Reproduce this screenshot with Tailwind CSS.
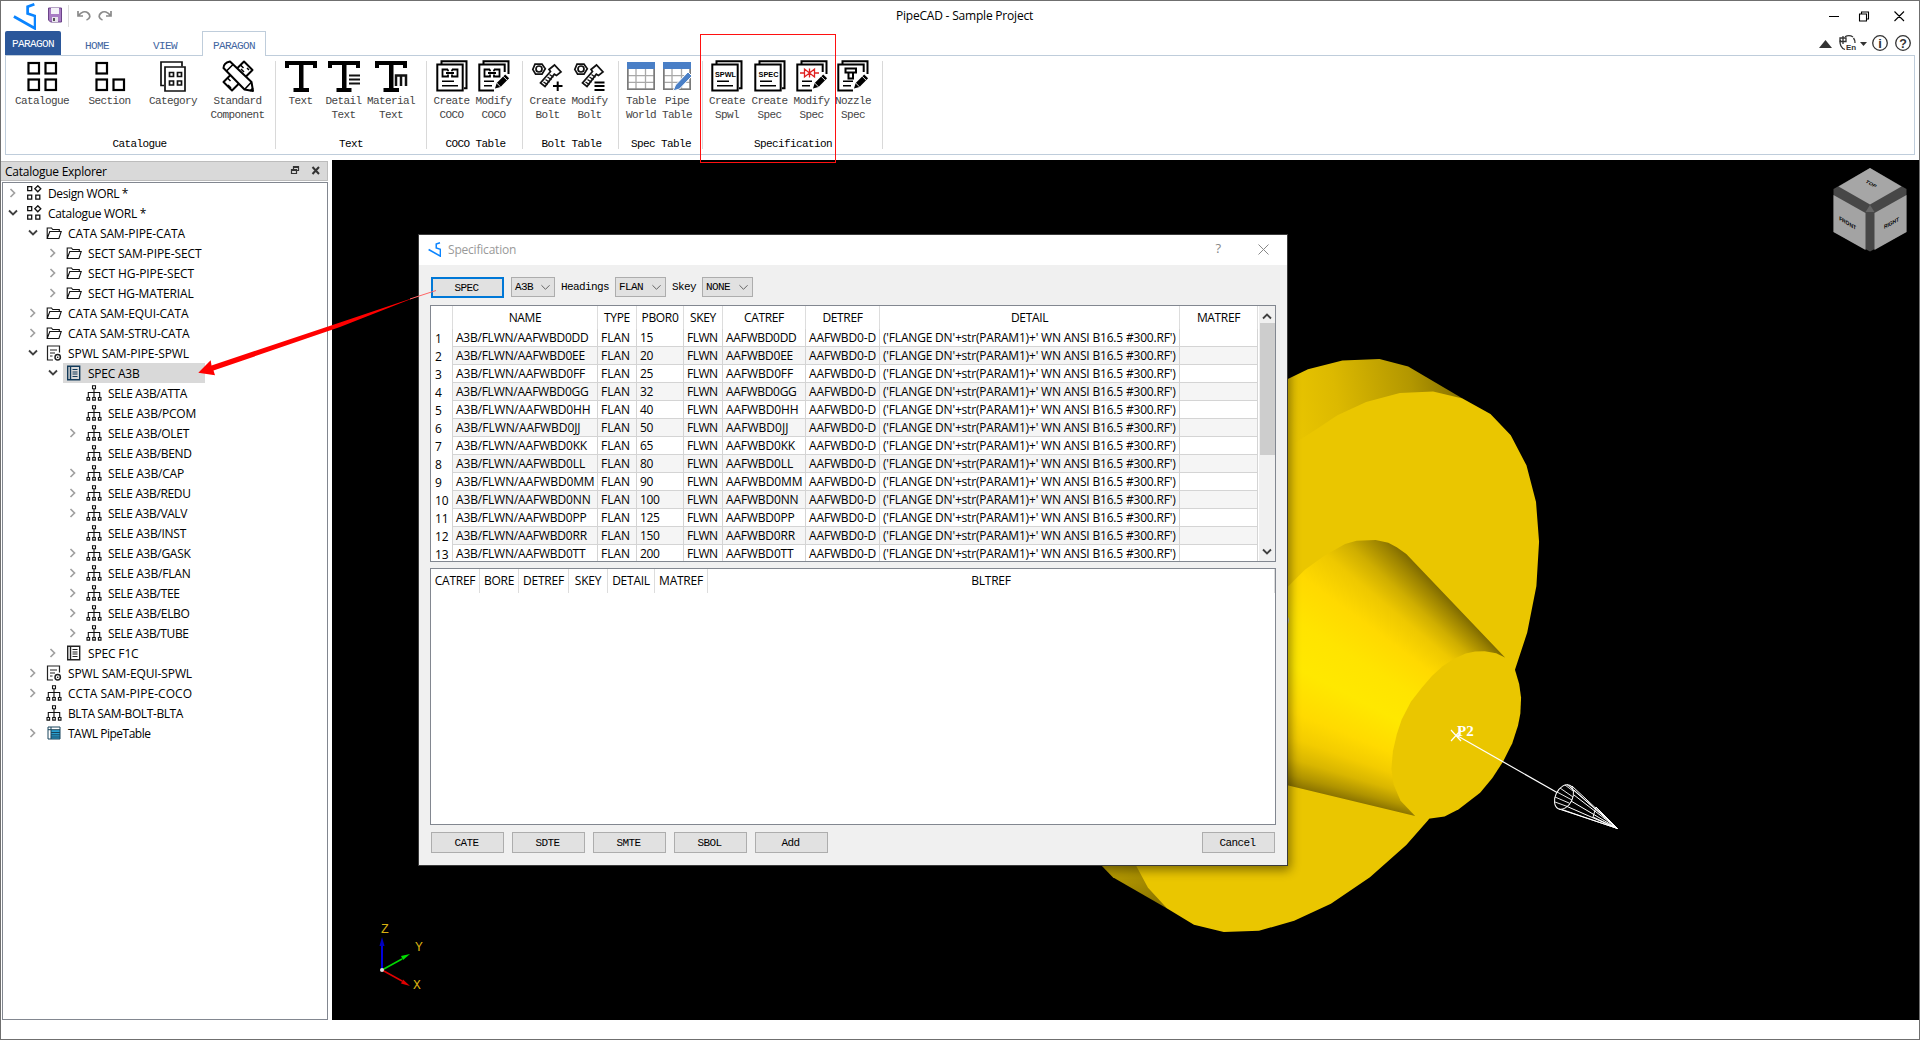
<!DOCTYPE html>
<html lang="en">
<head>
<meta charset="utf-8">
<title>PipeCAD - Sample Project</title>
<script src="https://cdn.jsdelivr.net/npm/@tailwindcss/browser@4"></script>
</head>
<body class="w-[1920px] h-[1040px] overflow-hidden bg-white font-['Open_Sans','Noto_Sans',sans-serif] text-[12px] text-black">
<svg class="hidden">
  <defs>
    <symbol id="logo" viewBox="0 0 22 26"><path d="M20.5 1.200L14 3.600v6.600l7.200 2.400v12L.8 13" fill="none" stroke="#0a84ff" stroke-width="2.600"/></symbol>
    <symbol id="chev-r" viewBox="0 0 10 10"><path d="M2.500 1l4 4-4 4" fill="none" stroke="#a0a0a0" stroke-width="1.700"/></symbol>
    <symbol id="chev-d" viewBox="0 0 10 10"><path d="M1 2.500l4 4 4-4" fill="none" stroke="#404040" stroke-width="1.800"/></symbol>
    <symbol id="t-world" viewBox="0 0 16 16"><path d="M1.700 1.700h4v4h-4zM1.700 10.200h4v4h-4zM9.800 10.200h4v4h-4zM11.800.8l3 3-3 3-3-3z" fill="none" stroke="#111" stroke-width="1.300"/></symbol>
    <symbol id="t-folder" viewBox="0 0 16 16"><path d="M1.200 13.500V3h4.300l1.200 1.500h6.600v2M1.200 13.500l2.600-7h11.400l-2.300 7z" fill="none" stroke="#111" stroke-width="1.100"/></symbol>
    <symbol id="t-spwl" viewBox="0 0 16 16"><path d="M7 15H1.500V1h12v6.500M4 5h7M4 8h5M4 11h2.500" fill="none" stroke="#222" stroke-width="1.200"/><circle cx="11.700" cy="12.200" r="2.700" fill="none" stroke="#222" stroke-width="1.500"/><circle cx="11.700" cy="12.200" r=".8"/></symbol>
    <symbol id="t-spec" viewBox="0 0 16 16"><path d="M1.700 1.200h12v13.600h-12zM4.500 1.200v13.600" fill="none" stroke="currentColor" stroke-width="1.400"/><path d="M6.500 4.500h5M6.500 7h5M6.500 9h5M6.500 11.500h5" stroke="currentColor" stroke-width="1.200"/></symbol>
    <symbol id="t-sele" viewBox="0 0 16 16"><path d="M6.500.7h3v3h-3zM1 12.500h2.600v2.600H1zM6.700 12.500h2.600v2.600H6.700zM12.400 12.500H15v2.600h-2.600zM8 3.700v8.800M2.300 12.500V7.500h11.400v5" fill="none" stroke="#111" stroke-width="1.100"/></symbol>
    <symbol id="t-table" viewBox="0 0 16 16"><path d="M2 2.500h12v11H2z" fill="#fff"/><path d="M5 5h9v9H5z" fill="#2a9fd0"/><path d="M2 2h12v12H2zM2 4.700h12M5 2v12M5 7.500h9M5 9.800h9M5 12h9" fill="none" stroke="#18455c" stroke-width="1"/></symbol>
    <g id="docs" fill="none" stroke="#000" stroke-width="2"><path d="M5.500 4V1.300h25v27H28" /><path d="M1.300 4.600h25.400v26H1.300z" fill="#fff"/><path d="M6 21.300h12M6 25.800h16" stroke-width="1.600"/></g>
    <g id="docs-cut" fill="none" stroke="#000" stroke-width="2"><path d="M5.500 4V1.300h25V14M16 30.600H1.300v-26h25.400V12"/><path d="M6 21.300h10M6 25.800h8" stroke-width="1.600"/></g>
    <g id="pencil"><path d="M17 28.500l1.700-5.500L27.200 14.400l3.900 3.800-8.600 8.700z" fill="#000"/><path d="M25.200 16.300l4 4M18.700 23l3.800 3.900" stroke="#fff" stroke-width=".9"/></g>
    <g id="link" fill="none" stroke="#000" stroke-width="1.800"><path d="M12 9.500H6.500v7H12v-2M16 9.500h5.500v7H16v-2M10 13h8M12 9.500v1.700M16 9.500v1.700"/></g>
    <g id="bolt" fill="none" stroke="#111" stroke-width="1.700"><path d="M3 3.200h7l3.300 4.500-3.300 5.500H3.600L.8 8.400z" transform="translate(0 1)"/><circle cx="7" cy="9" r="3"/><path d="M17 9.500L22.500 5l6.500 7-4.500 3.500-2.200-1.300-9.300 12.300-4.500-3.500 10-11.500z"/><path d="M17.500 14.500l4 2.800M15.500 17l4 2.800M13.500 19.500l4 2.800M11.500 22l4 2.600" stroke-width="1.300"/></g>
    <g id="tee"><path d="M0 1h32v7h-4V5H18.500v23H24v4H8.500v-4h5.500V5H4v3H0z" fill="#000"/></g>
    <g id="grid"><path d="M2 2h28v7H2z" fill="#4a7fc6"/><path d="M2.800 9v20.200h26.400V9M11 9v20M20.500 9v20M3 15.700h26M3 22.400h26" fill="none" stroke="#a8a8a8" stroke-width="1.300"/><path d="M2.800 9v20.200h26.400V9" fill="none" stroke="#7a7a7a" stroke-width="1.600"/></g>
  </defs>
</svg>

<div class="relative flex flex-col w-[1920px] h-[1040px] border border-[#6f6f6f]">
  <!-- title bar -->
  <header class="flex h-[30px] items-center shrink-0 relative">
    <svg class="w-[23px] h-[27px] ml-3"><use href="#logo"/></svg>
    <svg class="w-4 h-4 ml-[11px] mt-[-2px]" viewBox="0 0 16 16"><path d="M1.500 1h13v14h-11l-2-2z" fill="#a87bc4" stroke="#6b4488"/><path d="M4 1h8v6H4z" fill="#f4f2f8"/><path d="M5 10h6v5H5z" fill="#e8e4ee"/><path d="M6 11h2v3H6z" fill="#555"/></svg>
    <div class="w-px h-[22px] bg-[#dcdcdc] ml-[5px]"></div>
    <svg class="w-[14px] h-[12px] ml-2 mt-[-3px]" viewBox="0 0 14 12"><path d="M1 2v5h5M1.500 6.500C4 3 8 1.500 11 4s2 6-1.500 7" fill="none" stroke="#8a8a8a" stroke-width="1.700"/></svg>
    <svg class="w-[14px] h-[12px] ml-[7px] mt-[-3px]" viewBox="0 0 14 12"><path d="M13 2v5H8M12.500 6.500C10 3 6 1.500 3 4s-2 6 1.500 7" fill="none" stroke="#8a8a8a" stroke-width="1.700"/></svg>
    <div class="flex-1"></div>
    <svg class="w-[90px] h-5 mr-[5px]" viewBox="0 0 90 20" fill="none" stroke="#000" stroke-width="1.100"><path d="M5 10.500h10M35.500 8h7v7h-7zM37.500 8V6h7v7h-2M70.500 5.500l9.500 9.500M80 5.500L70.500 15"/></svg>
    <div class="absolute inset-x-0 top-[7px] text-center leading-4 pl-[9px] tracking-[-0.2px]">PipeCAD - Sample Project</div>
  </header>
  <!-- ribbon tabs -->
  <nav class="flex h-[24px] shrink-0 pl-1 font-['Liberation_Mono',monospace] text-[11px] tracking-[-0.6px] text-[#41659f] relative z-10">
    <div class="w-[56px] h-[24px] bg-[#2b579a] text-white text-center leading-[26px] rounded-t-[2px]">PARAGON</div>
    <div class="w-[72px] text-center leading-[31px]">HOME</div>
    <div class="w-[64px] text-center leading-[31px]">VIEW</div>
    <div class="w-[64px] ml-[5px] h-[25px] text-center leading-[29px] bg-white border border-b-0 border-[#bfcddb]">PARAGON</div>
    <div class="flex-1"></div>
    <svg class="w-[100px] h-6 mr-[5px]" viewBox="0 0 100 24"><path d="M5 17l6.500-8 6.500 8zM46 11h7l-3.500 4z" fill="#333"/><g fill="none" stroke="#333" stroke-width="1.300"><path d="M39 6a7.500 7.500 0 0 0-8-.2M26.500 9A7.500 7.500 0 0 0 31 18.500M39.500 7a7.500 7.500 0 0 1 1.500 5"/><path d="M26 7h6v3.500h-6zM29 5v8"/><circle cx="66" cy="12" r="7.300"/><circle cx="89" cy="12" r="7.300"/></g><g fill="#333" font-family="Liberation Sans" font-weight="bold" letter-spacing="0"><text x="32" y="19" font-size="8">En</text><text x="66" y="16.500" font-size="13" text-anchor="middle">i</text><text x="89" y="16.500" font-size="12.500" text-anchor="middle">?</text></g></svg>
  </nav>
  <!-- ribbon -->
  <section id="ribbon" class="flex h-[100px] mx-1 mr-[4px] shrink-0 border border-[#bfcddb] font-['Liberation_Mono',monospace] text-[11px] tracking-[-0.6px] leading-[14px]"></section>
  <div class="flex flex-1 min-h-0 pt-[5px]">
    <!-- dock -->
    <aside class="flex flex-col w-[327px] shrink-0 mr-[4px] h-[860px]">
      <div class="flex items-center h-[20px] bg-[#d9d9d9] border border-[#bcbcbc] border-l-0 pl-1 pr-[7px] mt-px">
        <span class="flex-1 tracking-[-0.25px] pt-px">Catalogue Explorer</span>
        <svg class="w-[30px] h-3" viewBox="0 0 30 12" fill="none" stroke="#333"><path d="M1.500 4.500h5v4h-5zM3.500 4V1.500h5v4H7M1.500 5.500h5M3.500 2.500h5" stroke-width="1.200"/><path d="M22.500 2l6.500 7M29 2l-6.500 7" stroke-width="2"/></svg>
      </div>
      <div id="tree" class="flex-1 mt-px ml-px border border-[#828790] bg-white"></div>
    </aside>
    <!-- 3D view -->
    <main class="w-[1587px] h-[860px] bg-black shrink-0">
      <svg width="1587" height="860" viewBox="332 160 1587 860">
        <defs>
          <linearGradient id="rimTop" gradientUnits="userSpaceOnUse" x1="600" y1="200" x2="1030" y2="120"><stop offset="0" stop-color="#eac600"/><stop offset=".3" stop-color="#dcb900"/><stop offset=".75" stop-color="#b39700"/><stop offset="1" stop-color="#8d7700"/></linearGradient>
          <linearGradient id="rimLow" gradientUnits="userSpaceOnUse" x1="170" y1="1290" x2="230" y2="1430"><stop offset="0" stop-color="#c8a900"/><stop offset="1" stop-color="#8d7700"/></linearGradient>
          <clipPath id="cone"><polygon transform="translate(1060 340) scale(.38265 .39541)" points="560,660 594,625 640,581 690,546 745,516 775,508 825,506 858,513 880,524 905,541 1163,803 1110,860 928,1204 594,1126 560,1118"/></clipPath>
        </defs>
        <g transform="translate(1060 340) scale(.38265 .39541)">
          <path d="M500 160L594 99 648 74 738 52 835 48 910 67 1052 148 800 300 500 350z" fill="url(#rimTop)"/>
          <path d="M80 1290L107 1328 138 1359 280 1438 300 1290z" fill="url(#rimLow)"/>
          <path d="M500 335L594 272 660 232 725 190 800 157 888 134 975 130 1052 148 1125 187 1178 241 1219 317 1244 410 1252 510 1245 622 1221 740 1189 834 963 1213 905 1277 810 1359 708 1426 612 1469 520 1494 428 1497 350 1479 280 1438 230 1385 198 1328 190 1290z" fill="#eac600"/>
        </g>
        <foreignObject x="1260" y="520" width="260" height="300" clip-path="url(#cone)"><div class="w-[260px] h-[300px] bg-[conic-gradient(from_0deg_at_468px_372px,#8a7300_283.6deg,#b09400_285deg,#d9b600_287deg,#f3cc00_289.500deg,#ffda00_292.500deg,#ffe800_297.500deg,#ffe400_302deg,#ffd900_306.500deg,#eec800_310deg,#cfae00_312.500deg,#9b8200_315.200deg,#7d6900_316.500deg)]"></div></foreignObject>
        <g transform="translate(1060 340) scale(.38265 .39541)">
          <path d="M1163 803L1189 834 1200 870 1205 905 1203 945 1197 975 1182 1020 1158 1066 1130 1108 1098 1145 1042 1187 1005 1205 963 1211 928 1204 890 1165 872 1125 866 1085 870 1040 880 998 893 960 917 915 945 880 972 850 1000 825 1030 806 1060 793 1085 788 1110 787 1140 792z" fill="#eac600"/>
        </g>
        <path d="M1287 616q4 3 0 10" fill="#ccc"/>
        <g stroke="#fff" fill="none" stroke-width="1.200"><path d="M1456 735L1557 792.500M1451 730l10 11M1461 730l-10 11" />
        <ellipse cx="1564" cy="797" rx="8.500" ry="13" transform="rotate(26 1564 797)" stroke-width="1"/>
        <path d="M1572 786L1617.500 828.500M1567 784.500L1617.500 828.500M1574 790L1617.500 828.500M1574 795L1617.500 828.500M1571 801L1617.500 828.500M1566 806L1617.500 828.500M1559 809L1617.500 828.500M1562 809.500L1617.500 828.500M1596 807L1617.500 828.500 1593 817z" stroke-width="1"/>
        <path d="M1565 785l8 6M1560 788l13 9M1557 792l15 8M1555 797l14 6M1555 802l11 4" stroke-width=".9"/></g>
        <text x="1457" y="736" font-family="Liberation Serif" font-weight="bold" font-size="15" fill="#fff">P2</text>
        <!-- axis triad -->
        <g stroke-width="1.500"><path d="M382 970V944" stroke="#0000dc" stroke-width="2"/><path d="M382 937l-2.500 9h5z" fill="#0000c0"/><path d="M382 970l20-11" stroke="#00d800"/><path d="M410 954l-9 2 2 4z" fill="#00e000"/><path d="M382 970l20 11" stroke="#e00000"/><path d="M410 986l-9-2.500 2-4z" fill="#e00000"/><circle cx="382" cy="970" r="2" fill="#ddd"/></g>
        <g font-family="Liberation Mono" font-size="13" fill="#d8b010"><text x="381" y="933">Z</text><text x="415" y="951">Y</text><text x="413" y="989">X</text></g>
        <!-- view cube -->
        <path d="M1870 168L1906.500 189V232L1870 251.500 1833.500 232V189z" fill="#474747"/>
        <path d="M1870 168L1901.500 186.500 1870 204.500 1838.500 186.500z" fill="#a6a6a6"/><path d="M1833.500 195L1865.500 213V250L1833.500 232z" fill="#a3a3a3"/><path d="M1906.500 195L1874.500 213V250L1906.500 232z" fill="#a3a3a3"/><path d="M1870 205l4.500 7h-9z" fill="#666"/>
        <g font-family="Liberation Sans" font-weight="bold" font-size="6.500" text-anchor="middle"><text transform="matrix(.75 .4 -.5 .5 1870 185)">TOP</text><text transform="matrix(.75 .45 0 .9 1847.500 225)">FRONT</text><text transform="matrix(.75 -.4 0 .9 1891.500 225)">RIGHT</text></g>
      </svg>
    </main>
  </div>

  <!-- dialog -->
  <section class="absolute left-[417px] top-[233px] w-[870px] h-[632px] border border-[#3a3a3a] bg-[#f0f0f0] flex flex-col shadow-[2px_4px_10px_rgba(0,0,0,0.45)]">
    <div class="flex items-center h-[30px] bg-white pl-[9px] pr-[18px] shrink-0">
      <svg class="w-[13px] h-[15px] mt-[-2px]"><use href="#logo"/></svg>
      <span class="ml-[7px] flex-1 text-[#999] tracking-[-0.2px]">Specification</span>
      <span class="text-[#888] text-[13px] mr-[37px] mt-[-2px]">?</span>
      <svg class="w-[11px] h-[11px] mt-[-2px]" viewBox="0 0 11 11"><path d="M.5.5l10 10M10.500.5l-10 10" stroke="#888"/></svg>
    </div>
    <div class="flex items-center h-[40px] pl-[12px] pt-[4px] shrink-0 font-['Liberation_Mono',monospace] text-[11px] tracking-[-0.6px]">
      <div class="w-[73px] h-[21px] bg-[#e1e1e1] border-2 border-[#0078d7] text-center leading-[18px] pr-[2px]">SPEC</div>
      <div class="w-[44px] h-[20px] ml-[7px] bg-[#e1e1e1] border border-[#adadad] pl-[3px] pr-1 flex items-center justify-between">A3B<svg class="w-[9px] h-[9px]" viewBox="0 0 10 10"><path d="M.5 2.500l4.500 4.500 4.500-4.500" fill="none" stroke="#555"/></svg></div>
      <span class="ml-[6px] w-[54px]">Headings</span>
      <div class="w-[51px] h-[20px] bg-[#e1e1e1] border border-[#adadad] pl-[3px] pr-1 flex items-center justify-between">FLAN<svg class="w-[9px] h-[9px]" viewBox="0 0 10 10"><path d="M.5 2.500l4.500 4.500 4.500-4.500" fill="none" stroke="#555"/></svg></div>
      <span class="ml-[6px] w-[30px]">Skey</span>
      <div class="w-[51px] h-[20px] bg-[#e1e1e1] border border-[#adadad] pl-[3px] pr-1 flex items-center justify-between">NONE<svg class="w-[9px] h-[9px]" viewBox="0 0 10 10"><path d="M.5 2.500l4.500 4.500 4.500-4.500" fill="none" stroke="#555"/></svg></div>
    </div>
    <div class="flex mx-[11px] w-[846px] h-[257px] bg-white border border-[#828790] shrink-0 overflow-hidden">
      <div id="grid-body" class="w-[828px] tracking-[-0.35px]"></div>
      <div class="flex flex-col w-[16px] bg-[#f0f0f0] items-center justify-between pt-[5px] pb-[4px] relative">
        <svg class="w-[10px] h-[10px] rotate-180"><use href="#chev-d"/></svg>
        <div class="w-[15px] h-[132px] bg-[#cdcdcd] mb-auto mt-[2px]"></div>
        <svg class="w-[10px] h-[10px]"><use href="#chev-d"/></svg>
      </div>
    </div>
    <div class="flex mx-[11px] mt-[6px] w-[846px] h-[257px] bg-white border border-[#828790] shrink-0 leading-[23px] text-center tracking-[-0.25px]">
      <div class="w-[49px] h-6 border-r border-[#ddd]">CATREF</div><div class="w-[39px] h-6 border-r border-[#ddd]">BORE</div><div class="w-[50px] h-6 border-r border-[#ddd]">DETREF</div><div class="w-[39px] h-6 border-r border-[#ddd]">SKEY</div><div class="w-[47px] h-6 border-r border-[#ddd]">DETAIL</div><div class="w-[53px] h-6 border-r border-[#ddd]">MATREF</div><div class="flex-1 h-6 border-r border-[#ddd]">BLTREF</div>
    </div>
    <div class="flex gap-2 mt-[7px] pl-[12px] pr-[12px] font-['Liberation_Mono',monospace] text-[11px] tracking-[-0.6px] text-center leading-[20px]">
      <div class="w-[73px] h-[21px] bg-[#e1e1e1] border border-[#adadad] pr-[2px]">CATE</div><div class="w-[73px] h-[21px] bg-[#e1e1e1] border border-[#adadad] pr-[2px]">SDTE</div><div class="w-[73px] h-[21px] bg-[#e1e1e1] border border-[#adadad] pr-[2px]">SMTE</div><div class="w-[73px] h-[21px] bg-[#e1e1e1] border border-[#adadad] pr-[2px]">SBOL</div><div class="w-[73px] h-[21px] bg-[#e1e1e1] border border-[#adadad] pr-[2px]">Add</div>
      <div class="w-[73px] h-[21px] bg-[#e1e1e1] border border-[#adadad] pr-[2px] ml-auto">Cancel</div>
    </div>
  </section>

  <!-- annotations -->
  <svg class="absolute -left-px -top-px w-[1920px] h-[1040px] pointer-events-none" viewBox="0 0 1920 1040"><rect x="700.500" y="34.500" width="135" height="128" fill="none" stroke="#ff1010"/><path d="M198.300 372.700L210.700 360.300 211.500 365.500 340 322.500 418 296.300 340 327 213.500 370.500 215 375.300z" fill="#f00"/><path d="M410 299l26-8.500" stroke="#f66" stroke-width="1"/></svg>
</div>

<script>
const use = id => `<use href="#${id}"/>`;
const label = (t, y, s) => `<text x="14.500" y="${y}" font-family="Liberation Sans" font-weight="bold" font-size="${s}" letter-spacing="0" text-anchor="middle">${t}</text>`;
const sq = (x, y, s) => `<rect x="${x}" y="${y}" width="${s}" height="${s}" fill="none" stroke="#000" stroke-width="2.200"/>`;
const groups = [
  ["Catalogue", "w-[270px]", [
    ["Catalogue", "w-[72px]", sq(2.5,3,10.5)+sq(19.5,3,10.5)+sq(2.5,19.5,10.5)+sq(19.5,19.5,10.5)],
    ["Section", "w-[63px]", sq(2.5,3,10.5)+sq(2.5,19.5,10.5)+sq(19.5,19.5,10.5)],
    ["Category", "w-[64px]", `<g fill="none" stroke="#111" stroke-width="1.700"><path d="M7 25.500H4V2h21v4.500"/><path d="M8 7h20v24H8z"/><path d="M12.500 12.500h4v4h-4zM20.500 12.500h4v4h-4zM12.500 21h4v4h-4zM20.500 21h4v4h-4z"/></g>`],
    ["Standard<br>Component", "w-[65px]", `<g stroke="#000" stroke-width="2" stroke-linejoin="round"><path d="M22 1.500l8.500 8.500L10 30.500 1.500 22z" fill="#fff" fill-opacity="1"/><path d="M18.500 5l3 3M25 8l2 2M5.500 18l3 3M9 28l-3-3M22 12l-3-3" fill="none" stroke-width="1.500"/><path d="M1.500 8Q1.500 3 8 1.500L29.500 22 31 31l-8.500-1.500z" fill="#fff"/><path d="M4.500 11L11 4.500M22.500 29.500L29.500 22M28 31l3-3" fill="none" stroke-width="1.600"/></g>`]]],
  ["Text", "w-[151px] pl-[2px]", [
    ["Text", "w-[45px]", use("tee")],
    ["Detail<br>Text", "w-[41px]", use("tee")+`<path d="M19.500 13h14v19h-10v-4h-4z" fill="#fff"/><path d="M21 15.500h11M21 19.500h11M21 23.500h11" stroke="#111" stroke-width="2"/>`],
    ["Material<br>Text", "w-[54px]", use("tee")+`<path d="M19 12h14v15H19z" fill="#fff"/><path d="M21 26V15.500h10V26M26 15.500V26" fill="none" stroke="#111" stroke-width="2.500"/>`]]],
  ["COCO Table", "w-[96px] pl-[4px]", [
    ["Create<br>COCO", "w-[41px]", use("docs")+use("link")],
    ["Modify<br>COCO", "w-[43px]", use("docs-cut")+use("link")+use("pencil")]]],
  ["Bolt Table", "w-[96px] pl-1", [
    ["Create<br>Bolt", "w-[41px]", use("bolt")+`<path d="M21 26h9.500M25.700 21.500V31" stroke="#000" stroke-width="2"/>`],
    ["Modify<br>Bolt", "w-[43px]", use("bolt")+`<path d="M20.500 22.500h10M20.500 26h10M20.500 30h10" stroke="#000" stroke-width="2"/>`]]],
  ["Spec Table", "w-[84px] pl-[3px]", [
    ["Table<br>World", "w-[38px]", use("grid")],
    ["Pipe<br>Table", "w-[34px]", use("grid")+`<path d="M12 31l2.500-6L27 12l4 4-12.500 13z" fill="#4a7fc6" stroke="#fff"/>`]]],
  ["Specification", "w-[180px] pl-[3px]", [
    ["Create<br>Spwl", "w-[42px]", use("docs")+label("SPWL",16.5,7.3)],
    ["Create<br>Spec", "w-[43px]", use("docs")+label("SPEC",16.5,7.3)],
    ["Modify<br>Spec", "w-[41px]", use("docs-cut")+`<path d="M4 13h4M19 13h4M8.500 9v8l5-4zM18.500 9v8l-5-4zM13.500 8.500v9" fill="none" stroke="#e02020" stroke-width="1.300"/>`+use("pencil")],
    ["Nozzle<br>Spec", "w-[42px]", use("docs-cut")+`<path d="M8.500 8.500h10.500v4H8.500zM11.500 12.500v6h4.500v-6" fill="none" stroke="#000" stroke-width="2"/>`+use("pencil")]]]
];
document.getElementById("ribbon").innerHTML = groups.map(([name, cls, items]) =>
  `<div class="${cls} relative flex flex-col pt-[4px] shrink-0">
    <div class="flex h-[77px] text-[#444]">${items.map(([t, w, svg]) =>
      `<div class="${w} flex flex-col items-center text-center whitespace-nowrap shrink-0"><svg class="w-8 h-8 mb-[2px] shrink-0 overflow-visible" viewBox="0 0 32 32">${svg}</svg><div>${t}</div></div>`).join("")}</div>
    <div class="text-center pr-[3px]">${name}</div>
    <div class="absolute right-0 top-[5px] w-px h-[88px] bg-[#d9d9d9]"></div>
  </div>`).join("");

// [level, chevron, icon, label, label width in px]
const rows = [
  [0,"r","t-world","Design WORL *",80],[0,"d","t-world","Catalogue WORL *",98],[1,"d","t-folder","CATA SAM-PIPE-CATA",117],
  [2,"r","t-folder","SECT SAM-PIPE-SECT",113.5],[2,"r","t-folder","SECT HG-PIPE-SECT",106],[2,"r","t-folder","SECT HG-MATERIAL",105.5],
  [1,"r","t-folder","CATA SAM-EQUI-CATA",120.5],[1,"r","t-folder","CATA SAM-STRU-CATA",121.5],[1,"d","t-spwl","SPWL SAM-PIPE-SPWL",121],
  [2,"d","t-spec","SPEC A3B",51.5],
  ...[["ATTA","",79],["PCOM","",88],["OLET","r",81],["BEND","",83.5],["CAP","r",76],["REDU","r",82.5],["VALV","r",79],["INST","",78],["GASK","r",82.5],["FLAN","r",82.5],["TEE","r",71.5],["ELBO","r",81.5],["TUBE","r",80.5]].map(([n,c,w]) => [3,c,"t-sele","SELE A3B/"+n,w]),
  [2,"r","t-spec","SPEC F1C",50.5],[1,"r","t-spwl","SPWL SAM-EQUI-SPWL",124],[1,"r","t-sele","CCTA SAM-PIPE-COCO",124],[1,"","t-sele","BLTA SAM-BOLT-BLTA",115],[1,"r","t-table","TAWL PipeTable",82.5]];
const indent = ["pl-[5px]", "pl-[25px]", "pl-[45px]", "pl-[65px]"];
document.getElementById("tree").innerHTML = rows.map(([lv, c, icon, t, w], i) =>
  `<div class="flex items-center h-5 ${indent[lv]}"><svg class="w-[10px] h-[10px] mr-[5px]">${c ? use("chev-" + c) : ""}</svg><div class="flex items-center h-5 ${i === 9 ? "bg-[#d9d9d9] w-[142px] text-black" : ""}"><svg class="w-4 h-4 ml-[3px] mr-[6px] ${i === 9 ? "text-[#123a5a]" : "text-[#222]"}">${use(icon)}</svg><span class="whitespace-nowrap pt-px" data-w="${w}">${t}</span></div></div>`).join("");

const cols = ["w-[145px]","w-[39px]","w-[47px]","w-[39px]","w-[83px]","w-[74px]","w-[300px]","w-[78px]"];
const heads = ["NAME","TYPE","PBOR0","SKEY","CATREF","DETREF","DETAIL","MATREF"];
// [suffix, bore, name width in px]
const data = [["DD",15,132.5],["EE",20,129],["FF",25,129],["GG",32,132.5],["HH",40,134.5],["JJ",50,124.5],["KK",65,131],["LL",80,129],["MM",90,138.5],["NN",100,134.5],["PP",125,130.5],["RR",150,131],["TT",200,129.5]];
document.getElementById("grid-body").innerHTML =
  `<div class="flex h-[23px] leading-[23px] text-center"><div class="w-[22px] border-r border-[#ddd]"></div>${heads.map((h, i) => `<div class="${cols[i]} border-r border-[#ddd]">${h}</div>`).join("")}</div>` +
  data.map(([s, b, w], r) => `<div class="flex h-[18px] leading-[17px] whitespace-nowrap"><div class="w-[22px] pl-1 border-r border-[#d4d4d4] leading-[19px] tracking-normal">${r + 1}</div>${
    [["A3B/FLWN/AAFWBD0"+s,w],["FLAN",29],[b,0],["FLWN",30.5],["AAFWBD0"+s,w-62],["AAFWBD0-D",67],["('FLANGE DN'+str(PARAM1)+' WN ANSI B16.5 #300.RF')",292.5],["",0]].map(([v, tw], i) =>
      `<div class="${cols[i]} border-r border-b border-[#d4d4d4] pl-[3px] ${r % 2 ? "bg-[#f5f5f5]" : ""}"><span data-w="${tw}">${v}</span></div>`).join("")}</div>`).join("");

// set each label's tracking so that it fills its stated width
const ctx = document.createElement("canvas").getContext("2d");
ctx.font = '12px "Open Sans", "Noto Sans", sans-serif';
document.querySelectorAll("[data-w]").forEach(el => {
  const w = +el.dataset.w, t = el.textContent;
  if (w) el.style.letterSpacing = (w - ctx.measureText(t).width) / t.length + "px";
});
</script>
</body>
</html>
